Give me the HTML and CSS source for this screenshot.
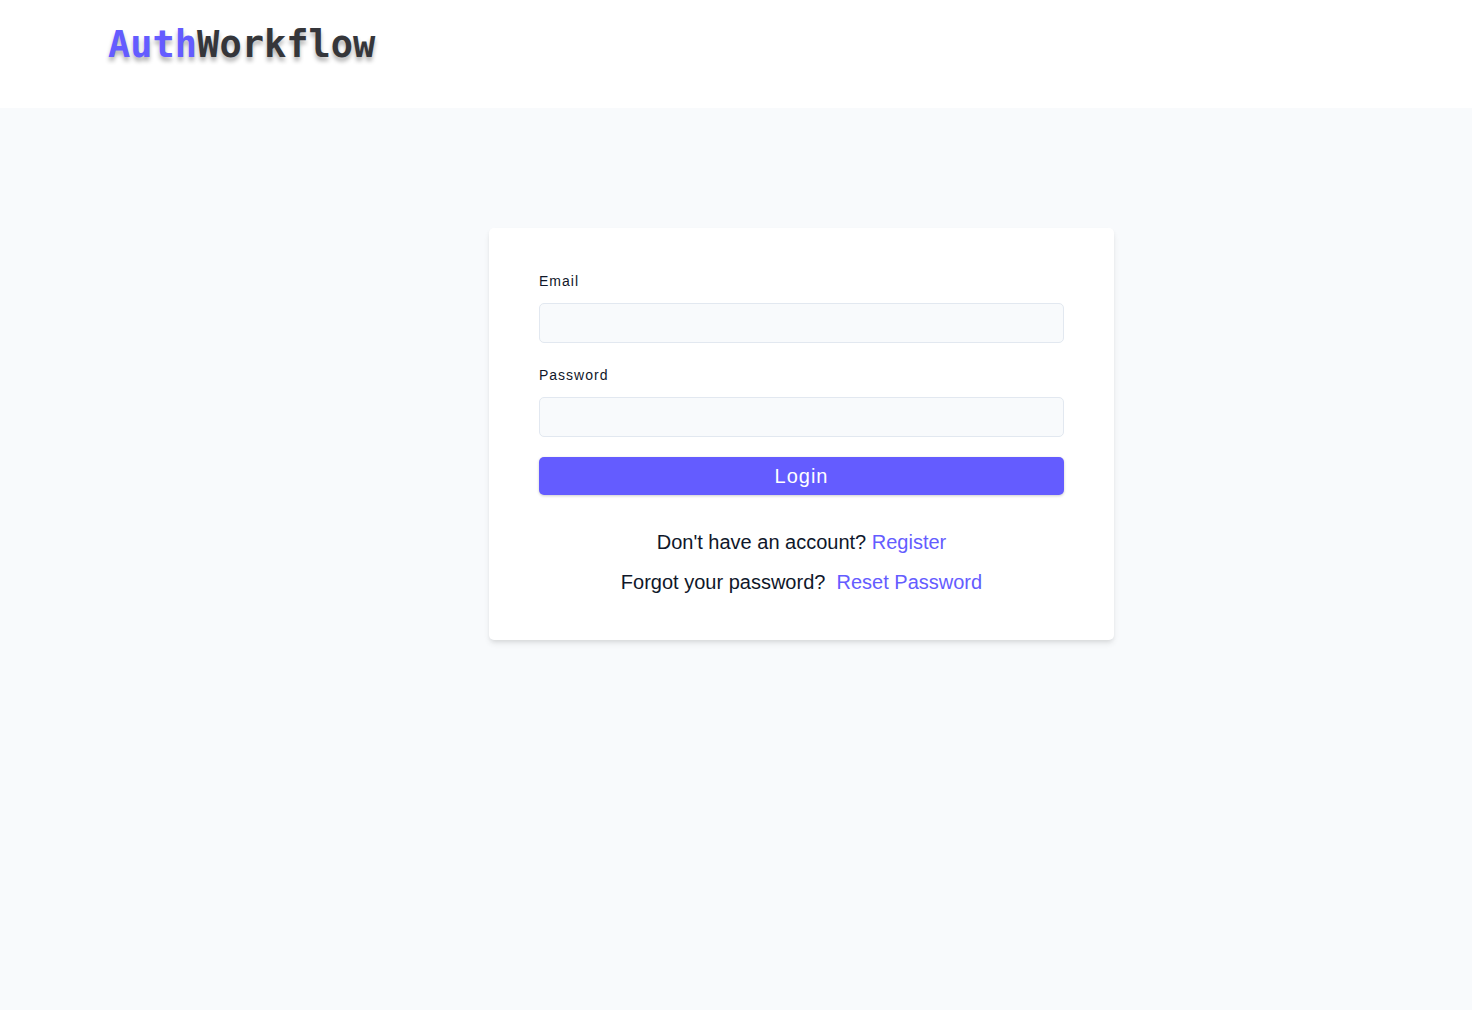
FILE: index.html
```html
<!DOCTYPE html>
<html lang="en">
<head>
<meta charset="utf-8">
<meta name="viewport" content="width=device-width, initial-scale=1">
<title>AuthWorkflow</title>
<link rel="stylesheet" href="styles.css">
</head>
<body>
<header class="navbar">
  <a class="logo" href="#"><span class="logo-accent">Auth</span>Workflow</a>
</header>
<main class="page">
  <form class="card">
    <div class="field">
      <label for="email">Email</label>
      <input id="email" type="email">
    </div>
    <div class="field">
      <label for="password">Password</label>
      <input id="password" type="password">
    </div>
    <button class="btn" type="submit">Login</button>
    <div class="links">
      <p>Don't have an account? <a href="#">Register</a></p>
      <p>Forgot your password?&nbsp; <a href="#">Reset Password</a></p>
    </div>
  </form>
</main>
</body>
</html>
```
FILE: styles.css
```css
* { box-sizing: border-box; }

body {
  margin: 0;
  min-height: 100vh;
  display: flex;
  flex-direction: column;
  background: #f8fafc;
  color: #0f172a;
  font-family: "Liberation Sans", Arial, sans-serif;
  font-size: 20px;
  line-height: 30px;
}

a {
  color: #645cff;
  text-decoration: none;
}

.navbar {
  min-height: 108px;
  padding: 20px 108px;
  background: #fff;
}

.logo {
  display: inline-block;
  color: #35363a;
  font-family: "DejaVu Sans Mono", monospace;
  font-size: 37px;
  font-weight: 700;
  line-height: 50px;
  text-shadow: 0 4px 4px rgba(0, 0, 0, 0.3);
}

.logo-accent { color: #645cff; }

.page {
  flex: 1;
  display: flex;
  justify-content: center;
  align-items: flex-start;
  padding: 120px 0 40px 131px;
}

.card {
  width: 100%;
  max-width: 625px;
  padding: 41px 50px 43px;
  background: #fff;
  border-radius: 5px;
  box-shadow: 0 4px 6px -1px rgba(0, 0, 0, 0.1), 0 2px 4px -1px rgba(0, 0, 0, 0.06);
}

.field { margin-bottom: 20px; }

.field label {
  display: block;
  margin-bottom: 10px;
  font-size: 14px;
  line-height: 24px;
  letter-spacing: 1px;
}

.field input {
  display: block;
  width: 100%;
  height: 40px;
  padding: 6px 12px;
  border: 1px solid #e2e8f0;
  border-radius: 5px;
  background: #f8fafc;
  font: inherit;
}

.btn {
  display: block;
  width: 100%;
  padding: 4px 12px;
  border: 0;
  border-radius: 5px;
  background: #645cff;
  box-shadow: 0 1px 3px rgba(0, 0, 0, 0.2);
  color: #fff;
  font: inherit;
  letter-spacing: 1px;
  cursor: pointer;
}

.links {
  display: grid;
  gap: 10px;
  margin-top: 32px;
  text-align: center;
}

.links p { margin: 0; }
```
